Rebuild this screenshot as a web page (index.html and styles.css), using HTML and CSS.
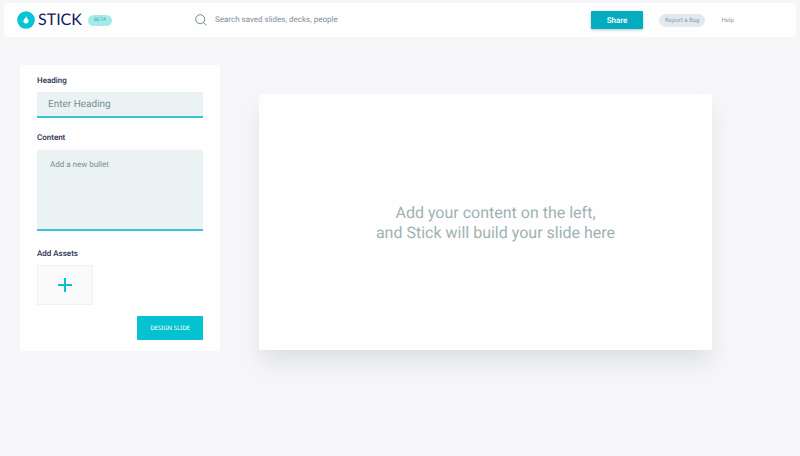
FILE: index.html
```html
<!DOCTYPE html>
<html lang="en">
<head>
<meta charset="utf-8">
<meta name="viewport" content="width=device-width, initial-scale=1">
<title>Stick</title>
<link rel="stylesheet" href="styles.css">
</head>
<body>
<header class="topbar">
  <a class="brand" href="#">
    <svg class="brand-mark" viewBox="0 0 18 18" aria-hidden="true">
      <circle cx="9" cy="9" r="8.8" fill="#05c5d3"/>
      <path d="M9.2 5C9.3 7 11.6 8.2 11.6 10.3A2.7 2.7 0 0 1 6.3 10.4C6.3 8.6 8.8 7 9.2 5Z" fill="#fff"/>
    </svg>
    <span class="brand-name">STICK</span>
    <span class="beta">BETA</span>
  </a>
  <form class="search">
    <label class="search-label" for="search" aria-label="Search">
      <svg class="search-icon" viewBox="0 0 12 12" aria-hidden="true">
        <circle cx="5.2" cy="5.2" r="4.5"/>
        <path d="M8.5 8.5L11.5 11.5"/>
      </svg>
    </label>
    <input class="search-input" id="search" type="text" placeholder="Search saved slides, decks, people">
  </form>
  <nav class="actions">
    <button class="share" type="button">Share</button>
    <a class="report" href="#">Report a Bug</a>
    <a class="help" href="#">Help</a>
  </nav>
</header>
<main class="workspace">
  <form class="panel">
    <label class="label" for="heading">Heading</label>
    <input class="field heading-field" id="heading" type="text" placeholder="Enter Heading">
    <label class="label" for="content">Content</label>
    <textarea class="field content-field" id="content" placeholder="Add a new bullet"></textarea>
    <label class="label" for="assets">Add Assets</label>
    <button class="add" id="assets" type="button">
      <svg class="plus" viewBox="0 0 14 14" aria-hidden="true"><path d="M7 0V14M0 7H14"/></svg>
    </button>
    <button class="design" type="button">DESIGN SLIDE</button>
  </form>
  <section class="slide">
    <p class="hint">Add your content on the left,<br>and Stick will build your slide here</p>
  </section>
</main>
</body>
</html>
```
FILE: styles.css
```css
* { box-sizing: border-box; }

body {
  margin: 0;
  padding: 3px 4px;
  background: #f6f5f7;
  color: #27304f;
  font-family: Roboto, "Liberation Sans", sans-serif;
  text-rendering: geometricPrecision;
}

a { color: inherit; text-decoration: none; }
button, input, textarea { font: inherit; border: 0; border-radius: 0; outline: 0; text-rendering: inherit; }
button { padding: 0; cursor: pointer; }

.topbar {
  display: grid;
  grid-template-columns: 191px 1fr 205px;
  align-items: center;
  height: 34px;
  background: #fefeff;
}

.brand { display: flex; align-items: center; padding-left: 13px; }
.brand-mark { width: 18px; height: 18px; }
.brand-name {
  margin-left: 3px;
  color: #17205c;
  font: 16px/20px Lato, sans-serif;
}
.beta {
  margin-left: 6px;
  padding: 0 6px;
  border-radius: 6px;
  background: #a6e9eb;
  color: #35a9b4;
  font-size: 5px;
  line-height: 11px;
}

.search { display: flex; align-items: center; gap: 8px; }
.search-label { display: flex; }
.search-icon {
  width: 12px;
  height: 12px;
  fill: none;
  stroke: #718994;
  stroke-width: 1;
}
.search-input {
  flex: 1;
  min-width: 0;
  padding: 0;
  background: none;
  font-size: 8px;
  line-height: 12px;
}
.search-input::placeholder { color: #82919b; opacity: 1; }

.actions { display: flex; align-items: center; color: #8b98a1; font-size: 6px; }
.share {
  width: 52px;
  height: 18px;
  border-radius: 1px;
  background: #04acbf;
  box-shadow: 0 1px 3px #7c98a488;
  color: #fff;
  font-size: 8px;
  font-weight: 500;
}
.report {
  margin: 0 16px;
  padding: 0 6px;
  border-radius: 7px;
  background: #e2eaf0;
  line-height: 13px;
}

.workspace { display: flex; align-items: flex-start; padding: 28px 16px; }

.panel {
  display: flex;
  flex-direction: column;
  flex: 0 0 200px;
  padding: 10px 17px 11px;
  background: #fefeff;
}
.label { font-size: 8px; font-weight: 500; line-height: 12px; }
.field {
  width: 100%;
  border-bottom: 2px solid #38c5d3;
  background: #ebf2f4;
}
.field::placeholder { color: #78908f; opacity: 1; }
.heading-field {
  height: 26px;
  margin: 5px 0 14px;
  padding: 1px 11px 0;
  font-size: 10px;
}
.content-field {
  height: 81px;
  margin: 6px 0 17px;
  padding: 9px 13px;
  font-size: 8px;
  line-height: 12px;
  resize: none;
}
.add {
  display: grid;
  place-items: center;
  width: 56px;
  height: 40px;
  margin: 5px 0 11px;
  border: 1px solid #f1f0f2;
  background: #fafafa;
}
.plus { width: 14px; height: 14px; fill: none; stroke: #0bc1cc; stroke-width: 2; }
.design {
  align-self: flex-end;
  width: 66px;
  height: 24px;
  border-radius: 1px;
  background: #04c2cf;
  color: #fff;
  font: 6px/12px "Noto Sans", sans-serif;
}

.slide {
  display: grid;
  place-items: center;
  flex: 1;
  min-height: 256px;
  margin: 29px 68px 0 39px;
  padding: 2px 0 0 20px;
  background: #fefeff;
  box-shadow: 0 14px 20px -4px #9fb2bc55;
}
.hint {
  margin: 0;
  color: #9eb2b1;
  font-size: 16px;
  line-height: 20px;
  text-align: center;
}
```
